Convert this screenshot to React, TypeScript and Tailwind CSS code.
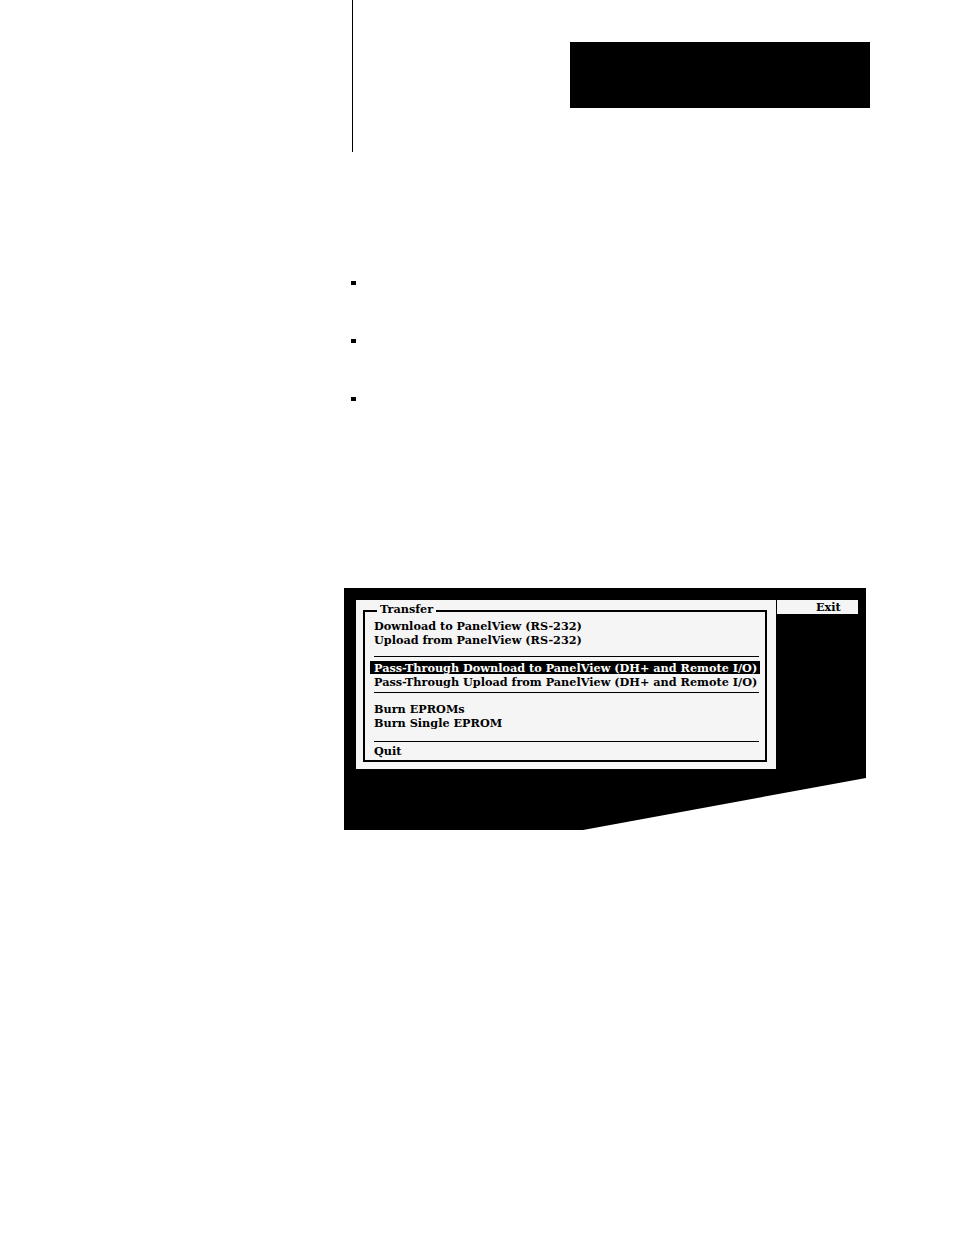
import React from "react";

const font = { fontFamily: '"DejaVu Serif", "Liberation Serif", serif' };

function Row({ children }: { children: React.ReactNode }) {
  return (
    <div className="h-[14px] leading-[14px] whitespace-nowrap">
      <span className="relative top-[1px]">{children}</span>
    </div>
  );
}

function Sep({ mt }: { mt: string }) {
  return <div className={`${mt} h-px bg-black mr-[6px]`} />;
}

export default function App() {
  return (
    <div className="relative w-[954px] h-[1235px] bg-white overflow-hidden" style={font}>
      {/* header */}
      <div className="flex h-[152px]">
        <div className="ml-[352px] w-px h-full bg-black" />
        <div className="ml-[217px] mt-[42px] w-[300px] h-[66px] bg-black" />
      </div>

      {/* bullets */}
      <div className="ml-[351px] mt-[129px] flex flex-col gap-[54px]">
        <div className="w-[5px] h-[4px] bg-black" />
        <div className="w-[5px] h-[4px] bg-black" />
        <div className="w-[5px] h-[4px] bg-black" />
      </div>

      {/* screen capture */}
      <div className="relative ml-[344px] mt-[187px] w-[522px] h-[242px]">
        <svg className="absolute inset-0" width="522" height="242" viewBox="0 0 522 242">
          <polygon points="0,0 522,0 522,190 239,242 0,242" fill="#000" />
        </svg>
        <div className="relative flex items-start pt-[12px] pl-[12px]">
          {/* main panel */}
          <div className="w-[420px] h-[169px] bg-[#f5f5f5] pt-[10px] pl-[7px]">
            <div className="relative w-[404px] h-[152px] border-2 border-black pl-[9px] pt-[6px] text-[11.25px] font-bold text-black">
              <span className="absolute left-[12px] top-[-10px] px-[3px] bg-[#f5f5f5] leading-[14px]">
                Transfer
              </span>
              <Row>Download to PanelView (RS-232)</Row>
              <Row>Upload from PanelView (RS-232)</Row>
              <Sep mt="mt-[10px]" />
              <div className="mt-[4px] -ml-[4px] mr-[5px] h-[13px] leading-[13px] bg-black text-white pl-[4px] whitespace-nowrap">
                <span className="relative top-[1px]">
                  Pass-Through Download to PanelView (DH+ and Remote I/O)
                </span>
              </div>
              <Row>Pass-Through Upload from PanelView (DH+ and Remote I/O)</Row>
              <Sep mt="mt-[4px]" />
              <div className="mt-[8px]">
                <Row>Burn EPROMs</Row>
                <Row>Burn Single EPROM</Row>
              </div>
              <Sep mt="mt-[12px]" />
              <div className="mt-[1px]">
                <Row>Quit</Row>
              </div>
            </div>
          </div>
          {/* exit bar */}
          <div className="ml-px w-[81px] h-[14px] bg-[#f5f5f5] leading-[14px] text-[11.25px] font-bold text-black pl-[39px]">
            Exit
          </div>
        </div>
      </div>
    </div>
  );
}
